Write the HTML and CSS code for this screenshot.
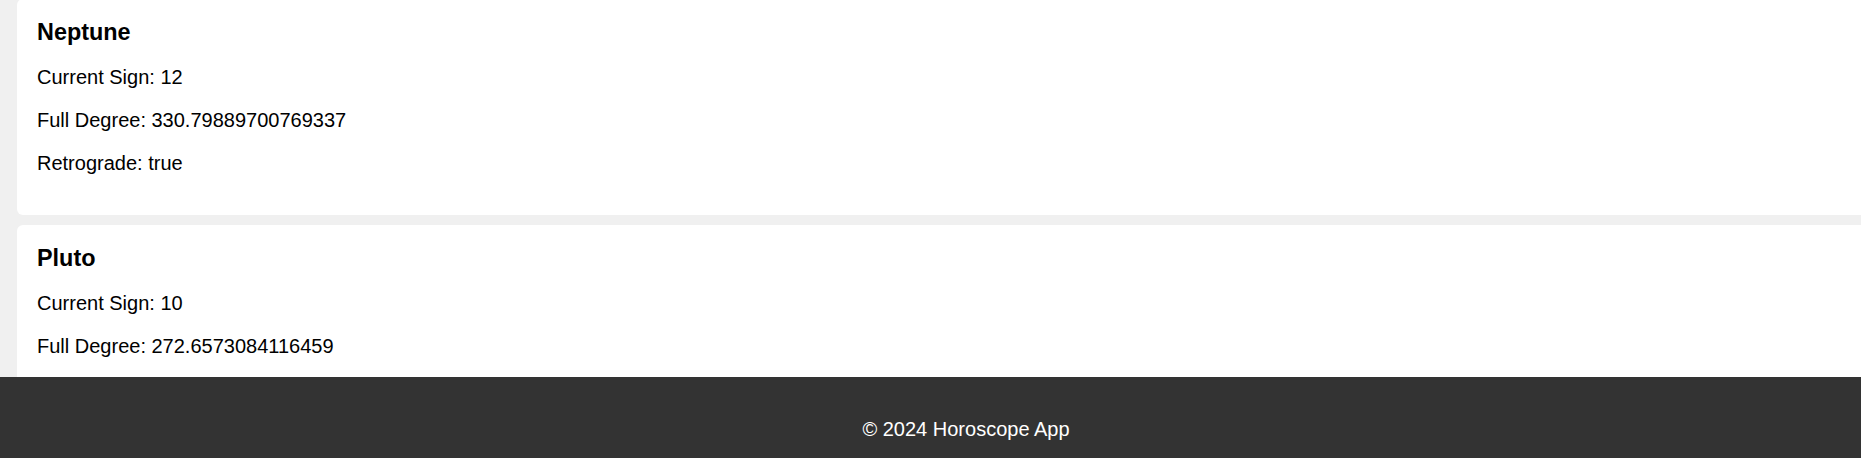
FILE: index.html
```html
<!DOCTYPE html>
<html lang="en">
<head>
<meta charset="utf-8">
<title>Horoscope App</title>
<link rel="stylesheet" href="styles.css">
</head>
<body>
<div class="page">
  <main class="planets">
    <section class="card">
      <h3 class="card-title">Neptune</h3>
      <p class="card-line">Current Sign: 12</p>
      <p class="card-line">Full Degree: 330.79889700769337</p>
      <p class="card-line">Retrograde: true</p>
    </section>
    <section class="card">
      <h3 class="card-title">Pluto</h3>
      <p class="card-line">Current Sign: 10</p>
      <p class="card-line">Full Degree: 272.6573084116459</p>
      <p class="card-line">Retrograde: true</p>
    </section>
  </main>
  <footer class="site-footer">
    <p class="footer-text">© 2024 Horoscope App</p>
  </footer>
</div>
</body>
</html>
```
FILE: styles.css
```css
html, body {
  margin: 0;
  padding: 0;
  background: #f0f0f0;
  overflow: hidden;
  height: 458px;
}
body {
  font-family: "Liberation Sans", Arial, sans-serif;
  color: #000;
}
.page {
  width: 1932px;
}
.planets {
  margin-top: -1px;
  padding-left: 17px;
}
.card {
  background: #fff;
  border-radius: 6px;
  padding: 20px;
  margin-bottom: 10px;
}
.card-title {
  font-size: 23.4px;
  font-weight: bold;
  margin: 0 0 12px;
}
.card-line {
  font-size: 20px;
  margin: 20px 0;
}
.site-footer {
  position: fixed;
  left: 0;
  top: 377px;
  width: 1932px;
  height: 81px;
  background: #333;
  color: #fff;
  text-align: center;
  box-sizing: border-box;
  padding-top: 41px;
}
.footer-text {
  margin: 0;
  font-size: 20px;
}
```
